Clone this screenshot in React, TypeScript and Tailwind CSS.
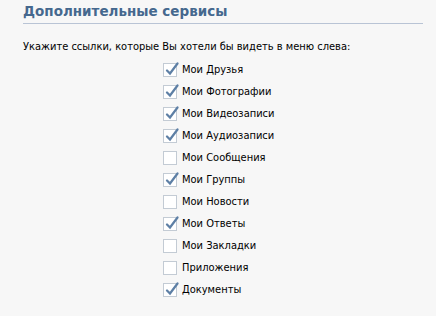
const ITEMS: { label: string; checked: boolean }[] = [
  { label: 'Мои Друзья', checked: true },
  { label: 'Мои Фотографии', checked: true },
  { label: 'Мои Видеозаписи', checked: true },
  { label: 'Мои Аудиозаписи', checked: true },
  { label: 'Мои Сообщения', checked: false },
  { label: 'Мои Группы', checked: true },
  { label: 'Мои Новости', checked: false },
  { label: 'Мои Ответы', checked: true },
  { label: 'Мои Закладки', checked: false },
  { label: 'Приложения', checked: false },
  { label: 'Документы', checked: true },
];

function Check({ checked }: { checked: boolean }) {
  return (
    <span className="relative block h-[14px] w-[14px] shrink-0 border border-[#c3cbd4] bg-white">
      {checked && (
        <svg className="absolute left-[1px] top-[-3px]" width="14" height="15" viewBox="0 0 14 15">
          <path d="M2 9.5 L5 12.5 L12.5 2.5" fill="none" stroke="#5d7fa5" strokeWidth="2.2" strokeLinecap="round" />
        </svg>
      )}
    </span>
  );
}

export default function App() {
  return (
    <div className="h-[316px] w-[436px] bg-[#f7f7f7] pl-[23px] pr-[13px] pt-[3px] font-['DejaVu_Sans_Condensed','Liberation_Sans',sans-serif] text-[11px]">
      <div className="border-b border-[#b9c4d5] pb-[3px] font-['DejaVu_Sans',sans-serif] text-[13.5px] font-bold leading-[17px] text-[#45688e]">
        Дополнительные сервисы
      </div>
      <p className="mt-[16px] leading-[14px] text-black">Укажите ссылки, которые Вы хотели бы видеть в меню слева:</p>
      <div className="mt-[5px] flex flex-col items-start pl-[140px]">
        {ITEMS.map((item) => (
          <label key={item.label} className="flex h-[22px] items-center gap-[5px] text-black">
            <Check checked={item.checked} />
            <span>{item.label}</span>
          </label>
        ))}
      </div>
    </div>
  );
}
